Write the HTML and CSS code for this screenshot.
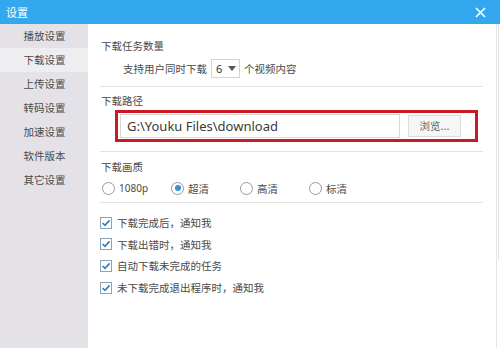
FILE: index.html
```html
<!DOCTYPE html>
<html lang="zh-CN">
<head>
    <meta charset="UTF-8">
    <meta name="viewport" content="width=device-width, initial-scale=1.0">
    <title>设置</title>
    <link rel="stylesheet" href="styles.css">
</head>
<body>
    <div class="window">
        <div class="titlebar">
            <span class="title">设置</span>
            <svg class="close" width="11" height="11" viewBox="0 0 11 11">
                <path d="M1 1 L10 10 M10 1 L1 10" stroke="#fff" stroke-width="1.7"/>
            </svg>
        </div>
        <div class="content">
            <div class="sidebar">
                <div class="nav-item">播放设置</div>
                <div class="nav-item selected">下载设置</div>
                <div class="nav-item">上传设置</div>
                <div class="nav-item">转码设置</div>
                <div class="nav-item">加速设置</div>
                <div class="nav-item">软件版本</div>
                <div class="nav-item">其它设置</div>
            </div>
            <div class="main">
                <div class="section first">
                    <div class="section-title">下载任务数量</div>
                    <div class="task-row">
                        <span>支持用户同时下载</span>
                        <span class="select">6<span class="arrow"></span></span>
                        <span>个视频内容</span>
                    </div>
                </div>
                <div class="section path">
                    <div class="section-title">下载路径</div>
                    <div class="highlight">
                        <div class="path-input">G:\Youku Files\download</div>
                        <div class="browse">浏览...</div>
                    </div>
                </div>
                <div class="section quality">
                    <div class="section-title">下载画质</div>
                    <div class="radio-row">
                        <label class="radio"><span class="dot"></span><span class="latin">1080p</span></label>
                        <label class="radio checked"><span class="dot"></span>超清</label>
                        <label class="radio"><span class="dot"></span>高清</label>
                        <label class="radio"><span class="dot"></span>标清</label>
                    </div>
                </div>
                <div class="section checks">
                    <div class="check-row"><svg class="box" width="12" height="12" viewBox="0 0 12 12"><rect x="0.5" y="0.5" width="11" height="11" fill="#fff" stroke="#8aa3b8"/><path d="M2.6 6 L5 8.4 L9.6 3.4" fill="none" stroke="#2f7fbf" stroke-width="1.6"/></svg>下载完成后，通知我</div>
                    <div class="check-row"><svg class="box" width="12" height="12" viewBox="0 0 12 12"><rect x="0.5" y="0.5" width="11" height="11" fill="#fff" stroke="#8aa3b8"/><path d="M2.6 6 L5 8.4 L9.6 3.4" fill="none" stroke="#2f7fbf" stroke-width="1.6"/></svg>下载出错时，通知我</div>
                    <div class="check-row"><svg class="box" width="12" height="12" viewBox="0 0 12 12"><rect x="0.5" y="0.5" width="11" height="11" fill="#fff" stroke="#8aa3b8"/><path d="M2.6 6 L5 8.4 L9.6 3.4" fill="none" stroke="#2f7fbf" stroke-width="1.6"/></svg>自动下载未完成的任务</div>
                    <div class="check-row"><svg class="box" width="12" height="12" viewBox="0 0 12 12"><rect x="0.5" y="0.5" width="11" height="11" fill="#fff" stroke="#8aa3b8"/><path d="M2.6 6 L5 8.4 L9.6 3.4" fill="none" stroke="#2f7fbf" stroke-width="1.6"/></svg>未下载完成退出程序时，通知我</div>
                </div>
            </div>
            <div class="edge"></div>
        </div>
    </div>
</body>
</html>
```

FILE: styles.css
```css
body {
    margin: 0;
    font-family: "Noto Sans CJK SC", "Noto Sans", sans-serif;
    font-size: 10.5px;
    color: #4a4a4a;
    background-color: #fff;
}
.window {
    width: 500px;
    height: 348px;
    display: flex;
    flex-direction: column;
    overflow: hidden;
}
.titlebar {
    height: 24px;
    flex-shrink: 0;
    background-color: #34a8ef;
    display: flex;
    align-items: center;
    justify-content: space-between;
    padding: 0 14px 0 6px;
    color: #fff;
    font-size: 11px;
}
.content {
    flex: 1;
    display: flex;
}
.sidebar {
    width: 88px;
    flex-shrink: 0;
    background-color: #e4e2e6;
}
.nav-item {
    height: 24px;
    line-height: 24px;
    text-align: center;
    padding-left: 1px;
}
.nav-item.selected {
    background-color: #eeedf0;
}
.main {
    width: 383px;
    padding: 0 13px 0 12px;
    border-right: 1px solid #e6e6e6;
}
.section {
    border-bottom: 1px solid #e2e2e2;
}
.section-title {
    height: 16px;
    line-height: 16px;
    padding-left: 1px;
}
.section.first {
    padding: 14px 0 8px;
}
.task-row {
    margin-top: 5px;
    height: 19px;
    display: flex;
    align-items: center;
    padding-left: 23px;
}
.select {
    display: inline-flex;
    align-items: center;
    width: 29px;
    height: 19px;
    box-sizing: border-box;
    margin: 0 4px 0 4px;
    padding-left: 4px;
    border: 1px solid #d4d4d4;
    font-family: "Noto Sans", sans-serif;
    font-size: 11px;
    color: #333;
}
.arrow {
    margin-left: 6px;
    width: 0;
    height: 0;
    border-left: 4px solid transparent;
    border-right: 4px solid transparent;
    border-top: 5px solid #555;
}
.section.path {
    padding: 6px 0 9px;
}
.highlight {
    margin: 1px 0 0 15px;
    width: 349px;
    height: 26px;
    border: 3px solid #c81a22;
    display: flex;
    align-items: center;
    padding: 0 6px 0 2px;
}
.path-input {
    width: 280px;
    height: 24px;
    box-sizing: border-box;
    border: 1px solid #d8d8d8;
    background-color: #fff;
    line-height: 22px;
    padding-left: 6px;
    font-family: "Noto Sans", sans-serif;
    font-size: 13px;
    color: #3a3a3a;
}
.browse {
    margin-left: 8px;
    width: 53px;
    height: 22px;
    box-sizing: border-box;
    border: 1px solid #dcdcdc;
    background-color: #f6f6f6;
    line-height: 20px;
    text-align: center;
    color: #666;
}
.section.quality {
    padding: 7px 0 5px;
}
.radio-row {
    margin-top: 4px;
    height: 18px;
    display: flex;
    align-items: center;
    padding-left: 2px;
}
.radio {
    display: flex;
    align-items: center;
    width: 69px;
}
.radio .dot {
    width: 13px;
    height: 13px;
    box-sizing: border-box;
    border: 1px solid #9a9a9a;
    border-radius: 50%;
    margin-right: 4px;
    display: flex;
    align-items: center;
    justify-content: center;
}
.radio.checked .dot::after {
    content: "";
    width: 6px;
    height: 6px;
    border-radius: 50%;
    background-color: #3a8fd2;
}
.latin {
    font-family: "Noto Sans", sans-serif;
    font-size: 10px;
}
.section.checks {
    border-bottom: none;
    padding-top: 9px;
}
.check-row {
    height: 21.6px;
    display: flex;
    align-items: center;
}
.check-row .box {
    margin-right: 5px;
}
.edge {
    width: 1px;
    height: 236px;
    margin-left: 1px;
    background-color: #e0e0e0;
}
```
